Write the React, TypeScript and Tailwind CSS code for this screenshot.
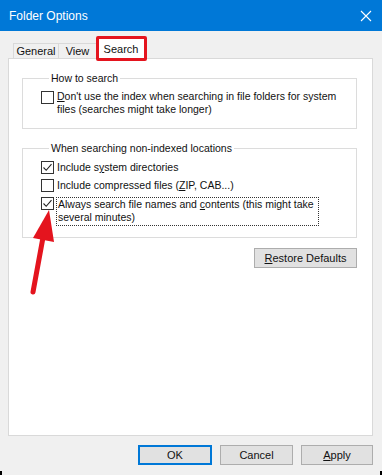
import React from "react";

const FONT = { fontFamily: '"Liberation Sans", Arial, sans-serif' };

function Box({ checked }: { checked?: boolean }) {
  return (
    <span className="relative w-[13px] h-[13px] shrink-0 border border-[#333333] bg-white">
      {checked && (
        <svg className="absolute left-0 top-0" width="11" height="11" viewBox="0 0 11 11">
          <path d="M1.5 5.5 L4.2 8.3 L9.5 2.2" fill="none" stroke="#222" strokeWidth="1.1" />
        </svg>
      )}
    </span>
  );
}

function Btn({ children, primary, className = "" }: { children: React.ReactNode; primary?: boolean; className?: string }) {
  return (
    <div
      className={`h-[20px] flex items-center justify-center bg-[#e1e1e1] text-[11px] text-[#111] ${
        primary ? "border-2 border-[#0078d7]" : "border border-[#adadad]"
      } ${className}`}
    >
      {children}
    </div>
  );
}

export default function App() {
  return (
    <div className="relative w-[382px] h-[475px] bg-[#f0f0f0] overflow-hidden text-[#111]" style={FONT}>
      {/* title bar */}
      <div className="h-[31px] bg-[#0078d7] flex items-center justify-between pl-[9px] pr-[10px]">
        <span className="text-white text-[12px]">Folder Options</span>
        <svg width="12" height="12" viewBox="0 0 12 12">
          <path d="M1 1 L11 11 M11 1 L1 11" stroke="#fff" strokeWidth="1.1" />
        </svg>
      </div>

      {/* tabs */}
      <div className="h-[27px] flex items-end pl-[13px] text-[11px]">
        <div className="h-[15px] w-[45px] flex items-center justify-center border-l border-t border-[#d9d9d9]">
          General
        </div>
        <div className="h-[15px] w-[39px] flex items-center justify-center border-l border-t border-r border-[#d9d9d9]">
          View
        </div>
        <div className="relative h-[21px] w-[48px] -mb-px z-10 bg-white flex items-start justify-center pt-[2px] border-l border-t border-r border-[#d9d9d9]">
          Search
        </div>
      </div>

      {/* page */}
      <div className="mx-[8px] mr-[9px] h-[378px] bg-white border border-[#d9d9d9] pt-[14px] pl-[13px] pr-[15px] text-[10.5px]">
        <fieldset className="border border-[#dcdcdc] h-[56px] pl-[18px] pt-[7px]">
          <legend className="ml-[8px] px-[2px] leading-[11px]">How to search</legend>
          <div className="flex items-start gap-[3px]">
            <Box />
            <div className="leading-[13px] -mt-px whitespace-nowrap">
              <span className="underline">D</span>on't use the index when searching in file folders for system
              <br />
              files (searches might take longer)
            </div>
          </div>
        </fieldset>

        <fieldset className="mt-[14px] border border-[#dcdcdc] h-[95px] pl-[18px] pt-[7px]">
          <legend className="ml-[8px] px-[2px] leading-[11px]">When searching non-indexed locations</legend>
          <div className="flex flex-col gap-[5px]">
            <div className="flex items-center gap-[3px]">
              <Box checked />
              <span className="leading-[13px] whitespace-nowrap">
                Include s<span className="underline">y</span>stem directories
              </span>
            </div>
            <div className="flex items-center gap-[3px]">
              <Box />
              <span className="leading-[13px] whitespace-nowrap">
                Include compressed files (<span className="underline">Z</span>IP, CAB...)
              </span>
            </div>
            <div className="flex items-start gap-[2px]">
              <Box checked />
              <div className="w-[263px] leading-[13px] pb-px border border-dotted border-[#333] pl-px whitespace-nowrap">
                Always search file names and <span className="underline">c</span>ontents (this might take
                <br />
                several minutes)
              </div>
            </div>
          </div>
        </fieldset>

        <div className="flex justify-end mt-[10px]">
          <Btn className="w-[103px]">
            <span>
              <span className="underline">R</span>estore Defaults
            </span>
          </Btn>
        </div>
      </div>

      {/* bottom buttons */}
      <div className="flex justify-end gap-[8px] pr-[9px] mt-[9px]">
        <Btn primary className="w-[74px]">OK</Btn>
        <Btn className="w-[73px]">Cancel</Btn>
        <Btn className="w-[72px]">
          <span>
            <span className="underline">A</span>pply
          </span>
        </Btn>
      </div>

      {/* annotations */}
      <div className="absolute left-[96px] top-[36px] w-[51px] h-[25px] border-[3px] border-[#e4141e] rounded-[2px] z-20" />
      <svg className="absolute left-0 top-0 z-20" width="382" height="475" viewBox="0 0 382 475">
        <path d="M33 292 L44 232" stroke="#e4141e" strokeWidth="5" strokeLinecap="round" />
        <path d="M49 210 L33 238 L54 242 Z" fill="#e4141e" />
      </svg>
      <div className="absolute left-0 top-[471px] w-[2px] h-[4px] bg-black" />
      <div className="absolute right-0 top-[471px] w-[2px] h-[4px] bg-black" />
    </div>
  );
}
